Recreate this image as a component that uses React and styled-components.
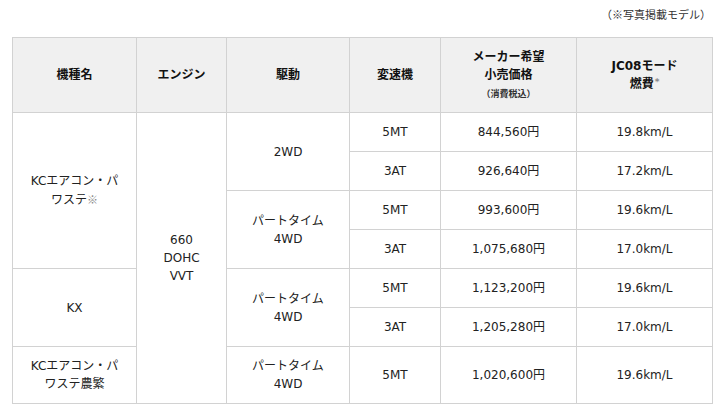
import React from "react";
import styled, { createGlobalStyle } from "styled-components";

const GlobalStyle = createGlobalStyle`
  body {
    margin: 0;
    background: #fff;
    color: #222;
    font-family: "DejaVu Sans", "Noto Sans CJK JP", sans-serif;
  }
`;

const Page = styled.div`
  width: 700px;
  padding: 6px 0 0 12px;
`;

const Note = styled.div`
  text-align: right;
  font-size: 11px;
  line-height: 16px;
  color: #333;
  margin: 0 1px 15px 0;
  font-family: "Noto Sans CJK JP", sans-serif;
`;

const SpecTable = styled.table`
  width: 700px;
  table-layout: fixed;
  border-collapse: collapse;
  font-size: 12px;
  line-height: 18px;
`;

const HeadCell = styled.th`
  height: 74px;
  padding: 0 6px;
  background: #f0f0f0;
  border: 1px solid #d2d2d2;
  font-weight: bold;
  color: #111;
  text-align: center;
  vertical-align: middle;
`;

const Cell = styled.td`
  padding: 10px 13px;
  border: 1px solid #d2d2d2;
  text-align: center;
  vertical-align: middle;
  color: #222;
`;

const Tax = styled.span`
  font-size: 9px;
  color: #333;
`;

const Star = styled.span`
  font-size: 9px;
  color: #888;
  vertical-align: top;
  line-height: 14px;
  margin-left: 1px;
`;

const Mark = styled.span`
  font-family: "Noto Sans CJK JP", sans-serif;
  font-size: 11px;
  color: #888;
`;

const rows = [
  { model: "kc", drive: "2wd", trans: "5MT", price: "844,560円", fuel: "19.8km/L" },
  { trans: "3AT", price: "926,640円", fuel: "17.2km/L" },
  { drive: "4wd", trans: "5MT", price: "993,600円", fuel: "19.6km/L" },
  { trans: "3AT", price: "1,075,680円", fuel: "17.0km/L" },
  { model: "kx", drive: "4wd", trans: "5MT", price: "1,123,200円", fuel: "19.6km/L" },
  { trans: "3AT", price: "1,205,280円", fuel: "17.0km/L" },
  { model: "farm", drive: "4wd1", trans: "5MT", price: "1,020,600円", fuel: "19.6km/L" },
];

const models = {
  kc: { span: 4, label: <>KCエアコン・パ<br />ワステ<Mark>※</Mark></> },
  kx: { span: 2, label: "KX" },
  farm: { span: 1, label: <>KCエアコン・パ<br />ワステ農繁</> },
};

const drives = {
  "2wd": { span: 2, label: "2WD" },
  "4wd": { span: 2, label: <>パートタイム<br />4WD</> },
  "4wd1": { span: 1, label: <>パートタイム<br />4WD</> },
};

const App = () => {
  return (
    <Page>
      <GlobalStyle />
      <Note>（※写真掲載モデル）</Note>
      <SpecTable>
        <colgroup>
          <col style={{ width: 124 }} />
          <col style={{ width: 90 }} />
          <col style={{ width: 123 }} />
          <col style={{ width: 91 }} />
          <col style={{ width: 136 }} />
          <col style={{ width: 136 }} />
        </colgroup>
        <thead>
          <tr>
            <HeadCell>機種名</HeadCell>
            <HeadCell>エンジン</HeadCell>
            <HeadCell>駆動</HeadCell>
            <HeadCell>変速機</HeadCell>
            <HeadCell>
              メーカー希望
              <br />
              小売価格
              <br />
              <Tax>（消費税込）</Tax>
            </HeadCell>
            <HeadCell>
              JC08モード
              <br />
              燃費<Star>*</Star>
            </HeadCell>
          </tr>
        </thead>
        <tbody>
          {rows.map((r, i) => (
            <tr key={i}>
              {r.model && <Cell rowSpan={models[r.model].span}>{models[r.model].label}</Cell>}
              {i === 0 && (
                <Cell rowSpan={7}>
                  660
                  <br />
                  DOHC
                  <br />
                  VVT
                </Cell>
              )}
              {r.drive && <Cell rowSpan={drives[r.drive].span}>{drives[r.drive].label}</Cell>}
              <Cell>{r.trans}</Cell>
              <Cell>{r.price}</Cell>
              <Cell>{r.fuel}</Cell>
            </tr>
          ))}
        </tbody>
      </SpecTable>
    </Page>
  );
};

export default App;
